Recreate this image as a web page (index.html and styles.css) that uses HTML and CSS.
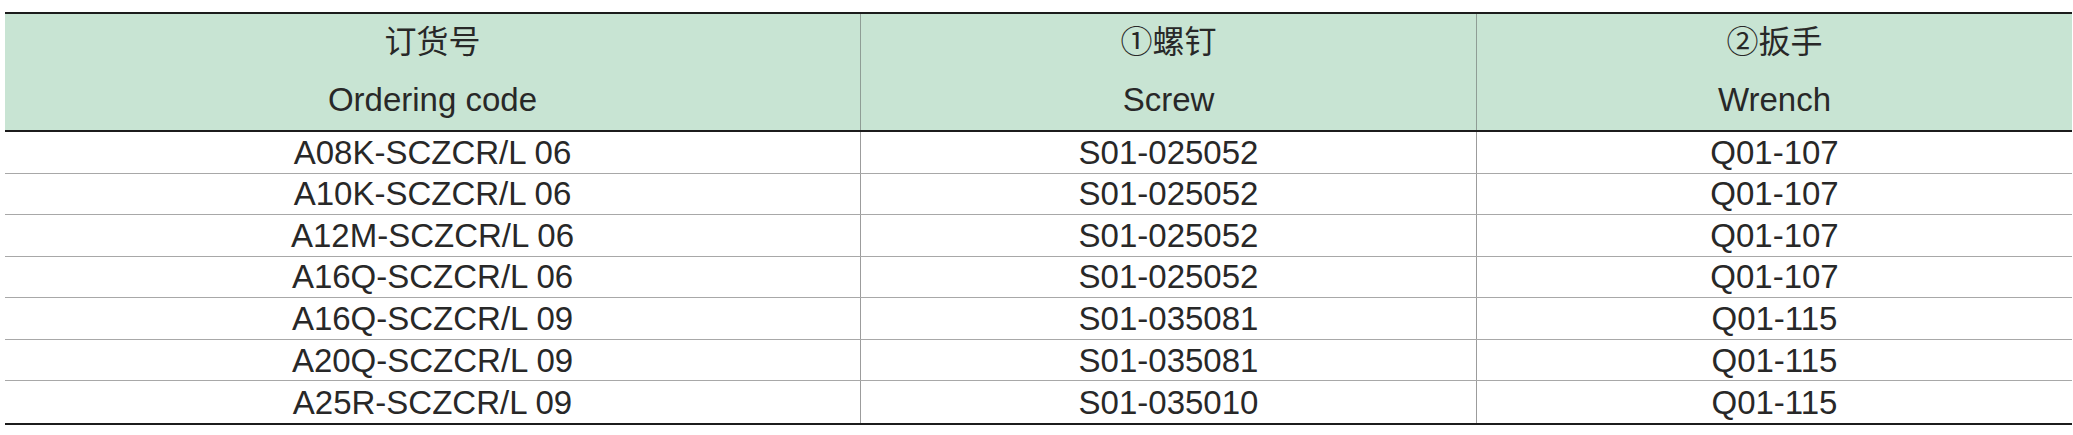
FILE: index.html
```html
<!DOCTYPE html>
<html lang="zh">
<head>
<meta charset="utf-8">
<title>订货号</title>
<link rel="stylesheet" href="styles.css">
</head>
<body>
<div class="table">
  <div class="row head">
    <div class="cell"><span class="zh">订货号</span><span class="en">Ordering code</span></div>
    <div class="cell"><span class="zh">①螺钉</span><span class="en">Screw</span></div>
    <div class="cell"><span class="zh">②扳手</span><span class="en">Wrench</span></div>
  </div>
  <div class="row data"><div class="cell">A08K-SCZCR/L 06</div><div class="cell">S01-025052</div><div class="cell">Q01-107</div></div>
  <div class="row data"><div class="cell">A10K-SCZCR/L 06</div><div class="cell">S01-025052</div><div class="cell">Q01-107</div></div>
  <div class="row data"><div class="cell">A12M-SCZCR/L 06</div><div class="cell">S01-025052</div><div class="cell">Q01-107</div></div>
  <div class="row data"><div class="cell">A16Q-SCZCR/L 06</div><div class="cell">S01-025052</div><div class="cell">Q01-107</div></div>
  <div class="row data"><div class="cell">A16Q-SCZCR/L 09</div><div class="cell">S01-035081</div><div class="cell">Q01-115</div></div>
  <div class="row data"><div class="cell">A20Q-SCZCR/L 09</div><div class="cell">S01-035081</div><div class="cell">Q01-115</div></div>
  <div class="row data"><div class="cell">A25R-SCZCR/L 09</div><div class="cell">S01-035010</div><div class="cell">Q01-115</div></div>
</div>
</body>
</html>
```
FILE: styles.css
```css
html, body {
  margin: 0;
  padding: 0;
  background: #ffffff;
}

body {
  font-family: "Liberation Sans", "Noto Sans CJK SC", sans-serif;
  color: #282828;
}

.table {
  width: 2067px;
  margin: 12px 0 0 5px;
  border-top: 2px solid #1c1c1c;
  border-bottom: 2px solid #1c1c1c;
}

.row {
  display: grid;
  grid-template-columns: 855px 616px 596px;
}

.cell + .cell {
  border-left: 1px solid #9c9c9c;
}

.head {
  background: #c8e4d3;
  border-bottom: 2px solid #1c1c1c;
}

.head .cell {
  display: flex;
  flex-direction: column;
  align-items: center;
  padding: 1px 0 3px;
  line-height: 54px;
}

.head .cell + .cell {
  border-left-color: #8f9d95;
}

.zh {
  font-size: 32px;
}

.en {
  font-size: 33px;
  margin-top: 4px;
}

.data {
  height: 41.57px;
  box-sizing: border-box;
  border-bottom: 1px solid #a8a8a8;
}

.data:last-child {
  border-bottom: none;
}

.data .cell {
  display: flex;
  align-items: center;
  justify-content: center;
  font-size: 33px;
  line-height: 1;
}
```
